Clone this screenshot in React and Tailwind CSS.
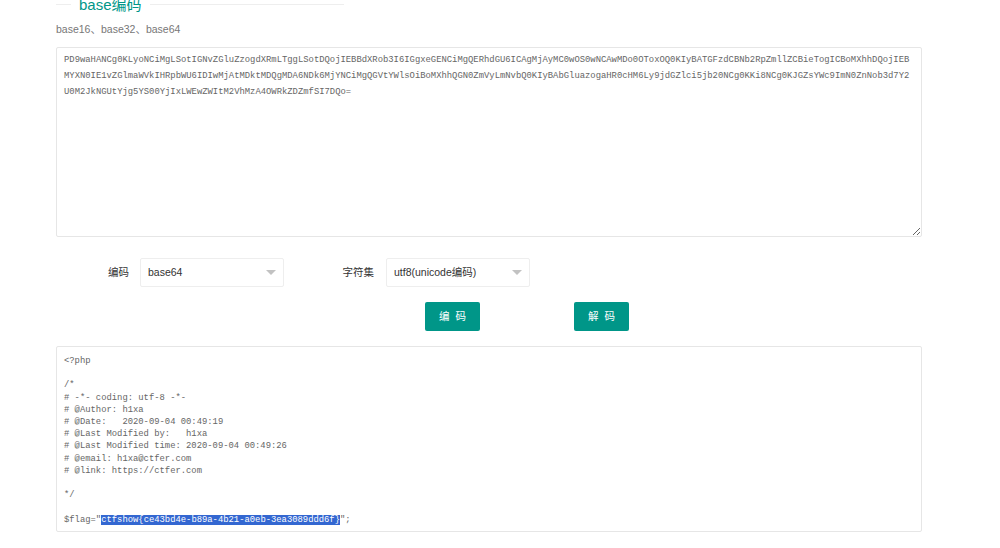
import React from 'react';

const encoded = [
  'PD9waHANCg0KLyoNCiMgLSotIGNvZGluZzogdXRmLTggLSotDQojIEBBdXRob3I6IGgxeGENCiMgQERhdGU6ICAgMjAyMC0wOS0wNCAwMDo0OToxOQ0KIyBATGFzdCBNb2RpZmllZCBieTogICBoMXhhDQojIEB',
  'MYXN0IE1vZGlmaWVkIHRpbWU6IDIwMjAtMDktMDQgMDA6NDk6MjYNCiMgQGVtYWlsOiBoMXhhQGN0ZmVyLmNvbQ0KIyBAbGluazogaHR0cHM6Ly9jdGZlci5jb20NCg0KKi8NCg0KJGZsYWc9ImN0ZnNob3d7Y2',
  'U0M2JkNGUtYjg5YS00YjIxLWEwZWItM2VhMzA4OWRkZDZmfSI7DQo=',
].join('\n');

const decoded = `<?php

/*
# -*- coding: utf-8 -*-
# @Author: h1xa
# @Date:   2020-09-04 00:49:19
# @Last Modified by:   h1xa
# @Last Modified time: 2020-09-04 00:49:26
# @email: h1xa@ctfer.com
# @link: https://ctfer.com

*/

$flag="`;

const sansFont = "font-['Liberation_Sans','Noto_Sans_CJK_SC',sans-serif]";

const SelectBox = ({ value }) => (
  <div className="flex h-[29px] w-[144px] items-center justify-between rounded-[2px] border border-[#eeeeee] bg-white pl-[7px] pr-[7px] text-[10.5px] text-[#333333]">
    <span>{value}</span>
    <span className="h-0 w-0 border-x-[5px] border-t-[5px] border-x-transparent border-t-[#c2c2c2]" />
  </div>
);

const ActionButton = ({ children }) => (
  <button className="flex h-[29px] w-[55px] items-center justify-center rounded-[2px] bg-[#009688] pl-[6px] text-[10.5px] tracking-[6px] text-white">
    {children}
  </button>
);

export default function App() {
  return (
    <div className={`h-[548px] w-[1000px] overflow-hidden bg-white pl-[56px] pr-[78px] ${sansFont}`}>
      {/* 标题 */}
      <div className="mt-[-5px] flex w-[288px] items-center">
        <div className="mb-[2px] h-px w-[15px] bg-[#eeeeee]" />
        <h2 className="mx-[8px] text-[15px] leading-[20px] text-[#009688]">base编码</h2>
        <div className="mb-[2px] h-px flex-1 bg-[#eeeeee]" />
      </div>
      <p className="mt-[4px] text-[10.5px] leading-[20px] text-[#777777]">base16、base32、base64</p>

      {/* 输入框 */}
      <textarea
        readOnly
        wrap="off"
        defaultValue={encoded}
        className="mt-[8px] block h-[190px] w-full overflow-hidden rounded-[2px] border border-[#e6e6e6] bg-white px-[7px] py-[4px] font-['Liberation_Mono',monospace] text-[8.87px] leading-[16px] text-[#666666] outline-none"
      />

      {/* 选项 */}
      <div className="mt-[21px] flex items-center text-[10.5px] text-[#333333]">
        <label className="w-[73px] text-right">编码</label>
        <div className="ml-[11px]">
          <SelectBox value="base64" />
        </div>
        <label className="w-[90px] text-right">字符集</label>
        <div className="ml-[12px]">
          <SelectBox value="utf8(unicode编码)" />
        </div>
      </div>

      <div className="ml-[369px] mt-[15px] flex gap-[94px]">
        <ActionButton>编码</ActionButton>
        <ActionButton>解码</ActionButton>
      </div>

      {/* 输出 */}
      <pre className="mt-[15px] h-[186px] overflow-hidden rounded-[2px] border border-[#e6e6e6] bg-white px-[7px] py-[8px] font-['Liberation_Mono',monospace] text-[8.85px] leading-[12.2px] text-[#666666]">
        {decoded}
        <span className="bg-[#3367d1] text-white">ctfshow{'{'}ce43bd4e-b89a-4b21-a0eb-3ea3089ddd6f{'}'}</span>
        {'";'}
      </pre>
    </div>
  );
}
